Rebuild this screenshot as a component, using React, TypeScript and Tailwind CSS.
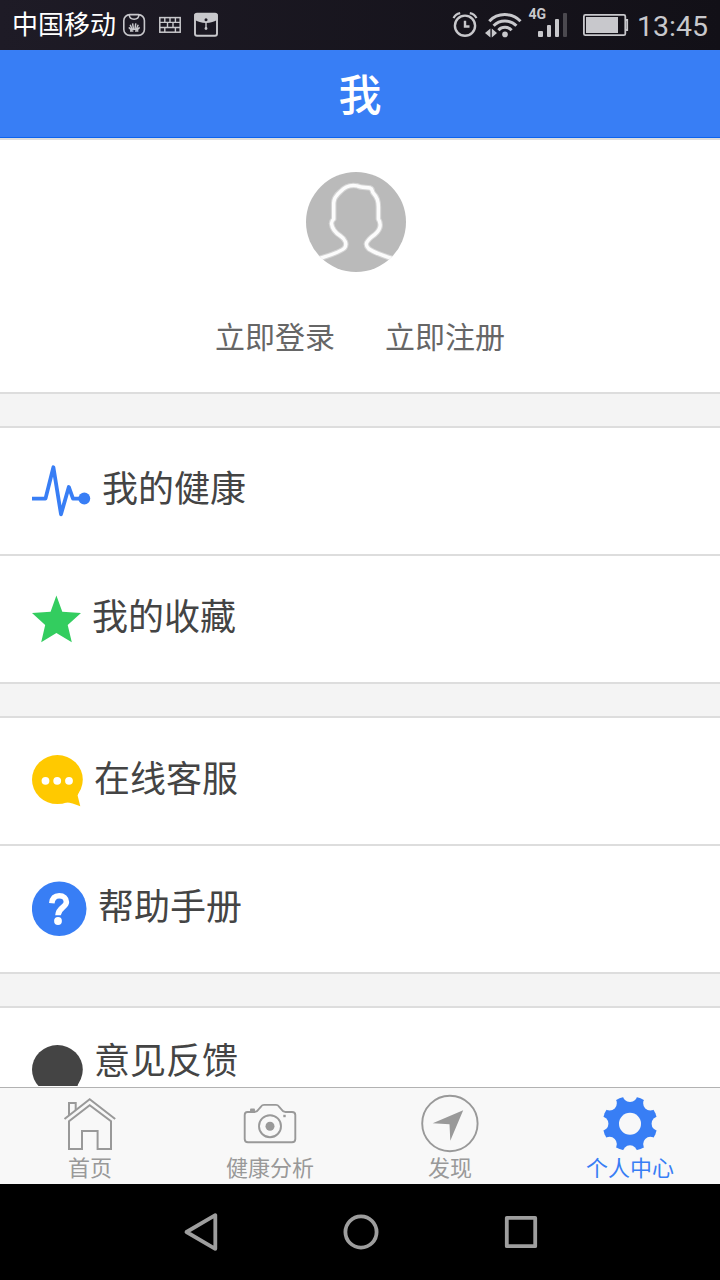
import type { ReactNode } from "react";

function StatusBar() {
  return (
    <div className="flex h-[50px] shrink-0 items-center bg-gradient-to-r from-[#1e1b26] to-[#121017] pl-3 text-[#c8c8cc]">
      <span className="-mt-1 w-[104px] text-[26px] leading-[46px] text-white">中国移动</span>
      <svg className="ml-1.5 shrink-0" width="98" height="50" viewBox="122 0 98 50" fill="none" stroke="#c8c8cc">
        <rect x="123.8" y="14.6" width="20.6" height="20.8" rx="6" strokeWidth="1.6" />
        <path d="M129.3 15 C129.5 20.5 138.7 20.5 138.9 15" strokeWidth="1.5" />
        <path
          d="M133.6 30 L132.6 23.4 M134.8 30 L135.8 23.4 M132.4 30 L130.2 24.8 M136 30 L138.2 24.8 M131.6 30.2 L128.8 27.4 M136.8 30.2 L139.6 27.4 M130 31 H133.4 M135 31 H138.4"
          strokeWidth="1.5"
        />
        <rect x="159.8" y="17.6" width="20.4" height="14.6" strokeWidth="1.5" />
        <path
          d="M160 22.4 H180 M160 27.5 H180 M164.8 18 V22 M170 18 V22 M175.4 18 V22 M167.5 22.5 V27.5 M173 22.5 V27.5 M164.8 27.5 V32 M175.4 27.5 V32"
          strokeWidth="1.4"
        />
        <rect x="195" y="13.8" width="22" height="22" rx="2" strokeWidth="1.9" />
        <path d="M194.5 14 H217.5 V19.5 C212 24 200 24 194.5 19.5 Z" fill="#c8c8cc" stroke="none" />
        <circle cx="206" cy="19.8" r="1.5" fill="#1d1a25" stroke="none" />
        <path d="M206 22 V28" strokeWidth="1.4" />
        <circle cx="206" cy="28.5" r="1.4" fill="#c8c8cc" stroke="none" />
      </svg>
      <svg className="ml-auto shrink-0" width="180" height="50" viewBox="450 0 180 50" fill="none" stroke="#c8c8cc">
        <circle cx="465" cy="25.7" r="10.1" strokeWidth="2.4" />
        <path d="M465 20.7 V26.5 H469.5" strokeWidth="2.4" />
        <path d="M453.6 18.2 C454.5 15.8 457 13.7 460.2 13.1 M476.4 18.2 C475.5 15.8 473 13.7 469.8 13.1" strokeWidth="2.2" />
        <g strokeWidth="3">
          <path d="M489.3 21.2 C497.5 12.4 512 12.4 520.5 21.2" />
          <path d="M493.6 25.8 C499.5 19.4 510.5 19.4 516.4 25.8" />
          <path d="M498.4 30.2 C502 26.4 508 26.4 511.6 30.2" />
        </g>
        <circle cx="505" cy="34.4" r="2.8" fill="#c8c8cc" stroke="none" />
        <path d="M490.4 28.4 V37.4 L485 33 Z M491.8 28.4 V37.4 L497 33 Z" fill="#c8c8cc" stroke="none" />
        <g fill="#c8c8cc" stroke="none">
          <text x="528.5" y="19" fontFamily="Roboto, sans-serif" fontSize="14" fontWeight="700">4G</text>
          <rect x="538" y="31" width="5" height="6" rx="1" />
          <rect x="547" y="25" width="4" height="12" rx="1" />
          <rect x="555" y="19" width="4" height="18" rx="1" />
          <rect x="563" y="13" width="4" height="24" rx="1" fill="#4b494f" />
        </g>
        <rect x="583.9" y="14.9" width="41.4" height="20.3" rx="1.5" strokeWidth="1.8" />
        <rect x="586" y="17" width="32" height="16" fill="#c8c8cc" stroke="none" />
        <path d="M626 20 H627.2 V30 H626" strokeWidth="1.8" />
      </svg>
      <span className="ml-[7px] mt-[3px] w-[83px] font-[Roboto,sans-serif] text-[28.5px] leading-[34px]">13:45</span>
    </div>
  );
}

function Avatar() {
  return (
    <svg className="mt-8 mr-2" width="100" height="100" viewBox="306 172 100 100">
      <clipPath id="avatar">
        <circle cx="356" cy="222" r="50" />
      </clipPath>
      <g clipPath="url(#avatar)" fill="none" strokeLinejoin="round">
        <rect x="306" y="172" width="100" height="100" fill="#bababa" />
        <path
          d="M318 259 C330 255 341 252 344.5 248 C347.5 244 345 239 340.5 236 C335 232.5 332 228 331.5 223.5 Q331.5 221 333.7 219 L333.7 203 C333.7 198 337 194.5 340.5 191.5 C345 186.5 350 184.5 357 185.8 C361 188 366 187.2 370 188 C373.5 189 371 191.5 374 194 C377.5 197.5 378.4 202 378.4 207 L378.4 219 Q381 223 379.8 227.5 C378.5 232 374.5 235 371.5 237 C366 242 364.5 244.5 369 249 C375 253 384 256 394 259"
          stroke="#fcfcfc"
          strokeOpacity="0.4"
          strokeWidth="5.6"
        />
        <path
          d="M318 259 C330 255 341 252 344.5 248 C347.5 244 345 239 340.5 236 C335 232.5 332 228 331.5 223.5 Q331.5 221 333.7 219 L333.7 203 C333.7 198 337 194.5 340.5 191.5 C345 186.5 350 184.5 357 185.8 C361 188 366 187.2 370 188 C373.5 189 371 191.5 374 194 C377.5 197.5 378.4 202 378.4 207 L378.4 219 Q381 223 379.8 227.5 C378.5 232 374.5 235 371.5 237 C366 242 364.5 244.5 369 249 C375 253 384 256 394 259"
          stroke="#fcfcfc"
          strokeWidth="3.4"
        />
      </g>
    </svg>
  );
}

function PulseIcon() {
  return (
    <svg className="mt-9 shrink-0" width="59" height="54" viewBox="32 464 59 54">
      <path
        d="M32 498.6 H45.5 L53.4 467.3 L61 514.3 L68.8 487 L73 498.6 H84"
        fill="none"
        stroke="#387ef5"
        strokeWidth="3.8"
        strokeLinejoin="round"
      />
      <circle cx="84.3" cy="498.5" r="5.9" fill="#387ef5" />
    </svg>
  );
}

function StarIcon() {
  return (
    <svg className="mt-[39px] shrink-0" width="49" height="48" viewBox="32 595 49 48">
      <path
        d="M56.4 595.4 L62.3 611.8 L81 613 L67.7 625 L71.8 642.2 L56.4 633 L41.2 642.2 L45.2 625 L32 613 L50.6 611.8 Z"
        fill="#33cd5f"
      />
    </svg>
  );
}

function ChatIcon({ color, dots }: { color: string; dots?: boolean }) {
  return (
    <svg className="mt-[37px] shrink-0" width="51" height="52" viewBox="32 755 51 52">
      <ellipse cx="57.4" cy="779.6" rx="25.4" ry="24.5" fill={color} />
      <path d="M65 802.6 Q69.5 801.5 80.3 806.2 L77.6 795.5 L80 788 Z" fill={color} />
      {dots && (
        <g fill="#fff">
          <circle cx="45.5" cy="780.8" r="3.9" />
          <circle cx="57.2" cy="780.8" r="3.9" />
          <circle cx="69" cy="780.8" r="3.9" />
        </g>
      )}
    </svg>
  );
}

function HelpIcon() {
  return (
    <svg className="mt-[35px] shrink-0" width="55" height="56" viewBox="32 881 55 56">
      <circle cx="59.2" cy="908.7" r="27.3" fill="#387ef5" />
      <path
        d="M51.8 903.3 C52.3 898.3 54.8 895.8 59.2 895.8 C63.6 895.8 66.4 898.3 66.4 902 C66.4 907.2 58.2 907.5 58 915.2"
        fill="none"
        stroke="#fff"
        strokeWidth="5.6"
      />
      <circle cx="58" cy="921" r="3.9" fill="#fff" />
    </svg>
  );
}

function Row({ icon, label, high, last }: { icon: ReactNode; label: string; high?: boolean; last?: boolean }) {
  return (
    <div className={`flex h-32 shrink-0 items-start gap-[11px] bg-white pl-8 ${last ? "" : "border-b-2 border-[#dddddd]"}`}>
      {icon}
      <span className={`text-[36px] leading-[52px] text-[#444444] ${high ? "mt-6" : "mt-8"}`}>{label}</span>
    </div>
  );
}

function Gap() {
  return <div className="h-[34px] shrink-0 border-b-2 border-[#dddddd] bg-[#f4f4f4]" />;
}

function HomeIcon() {
  return (
    <svg width="60" height="60" viewBox="60 1094 60 60" fill="none" stroke="#999" strokeWidth="2">
      <path d="M64.5 1119 L89.7 1099.2 L115.2 1119" />
      <path d="M69 1149 V1121.3 L89.7 1105.2 L111 1121.3 V1149 H97.6 V1131 H82 V1149 Z" />
      <path d="M69 1115 V1103 H75.7 V1110" />
    </svg>
  );
}

function CameraIcon() {
  return (
    <svg width="60" height="60" viewBox="240 1094 60 60" fill="none" stroke="#999" strokeWidth="1.9">
      <path d="M247.5 1112 H254.5 Q257 1112 258.5 1109.5 L261.2 1106.3 Q262.2 1104.9 264 1104.9 H276 Q277.8 1104.9 278.8 1106.3 L281.5 1109.5 Q283 1112 285.5 1112 H292 Q295.3 1112 295.3 1115 V1139 Q295.3 1142.3 292 1142.3 H248 Q244.7 1142.3 244.7 1139 V1115 Q244.7 1112 247.5 1112 Z" />
      <circle cx="270" cy="1126.2" r="11" />
      <circle cx="270" cy="1126.2" r="4.5" fill="#999" stroke="none" />
      <rect x="250" y="1108.4" width="5" height="3" rx="1" fill="#999" stroke="none" />
      <rect x="283.3" y="1114.8" width="2.4" height="2.4" fill="#999" stroke="none" />
    </svg>
  );
}

function CompassIcon() {
  return (
    <svg width="60" height="60" viewBox="420 1094 60 60">
      <circle cx="449.9" cy="1123.5" r="27.7" fill="none" stroke="#999" strokeWidth="1.9" />
      <path d="M463.2 1110.3 L450.3 1140.8 L449.5 1124.2 L432.7 1123.2 Z" fill="#999" />
    </svg>
  );
}

function GearIcon() {
  return (
    <svg width="60" height="60" viewBox="-30 -29.7 60 60">
      <mask id="gear">
        <circle r="27.5" fill="#fff" />
        <circle r="11" fill="#000" />
        {[0, 45, 90, 135, 180, 225, 270, 315].map((angle) => (
          <circle key={angle} cx="28.8" r="7.2" fill="#000" transform={`rotate(${angle})`} />
        ))}
      </mask>
      <rect x="-30" y="-30" width="60" height="60" fill="#387ef5" mask="url(#gear)" />
    </svg>
  );
}

function Tab({ icon, label, active }: { icon: ReactNode; label: string; active?: boolean }) {
  return (
    <div className={`flex flex-1 flex-col items-center pt-1.5 text-[22px] leading-7 ${active ? "text-[#387ef5]" : "text-[#999999]"}`}>
      {icon}
      <span className="-mt-0.5">{label}</span>
    </div>
  );
}

export default function App() {
  return (
    <div className="flex h-[1280px] w-[720px] flex-col overflow-hidden bg-white font-['Noto_Sans_CJK_SC',sans-serif]">
      <StatusBar />
      <header className="h-[88px] shrink-0 border-b border-[#0c63ee] bg-[#387ef5] text-center text-[43px] leading-[85px] font-medium text-white">
        我
      </header>
      <main className="flex h-[948px] shrink-0 flex-col overflow-hidden">
        <section className="flex h-64 shrink-0 flex-col items-center border-y-2 border-[#dddddd] bg-white">
          <Avatar />
          <div className="mt-[43px] flex gap-[50px] text-[30px] leading-10 text-[#666666]">
            <span>立即登录</span>
            <span>立即注册</span>
          </div>
        </section>
        <Gap />
        <Row icon={<PulseIcon />} label="我的健康" />
        <Row icon={<StarIcon />} label="我的收藏" />
        <Gap />
        <Row icon={<ChatIcon color="#ffc900" dots />} label="在线客服" />
        <Row icon={<HelpIcon />} label="帮助手册" />
        <Gap />
        <Row icon={<ChatIcon color="#444444" />} label="意见反馈" high last />
      </main>
      <nav className="mt-px flex h-[97px] shrink-0 border-t border-[#b2b2b2] bg-[#f8f8f8]">
        <Tab icon={<HomeIcon />} label="首页" />
        <Tab icon={<CameraIcon />} label="健康分析" />
        <Tab icon={<CompassIcon />} label="发现" />
        <Tab icon={<GearIcon />} label="个人中心" active />
      </nav>
      <footer className="flex h-24 shrink-0 items-center justify-center bg-black">
        <svg width="400" height="96" viewBox="160 1184 400 96" fill="none" stroke="#9e9e9e" strokeWidth="3.8" strokeLinejoin="round">
          <path d="M186.5 1232 L215.3 1215.2 V1248.8 Z" />
          <circle cx="361" cy="1232" r="15.6" />
          <rect x="506.8" y="1217.8" width="28.4" height="28.4" />
        </svg>
      </footer>
    </div>
  );
}
